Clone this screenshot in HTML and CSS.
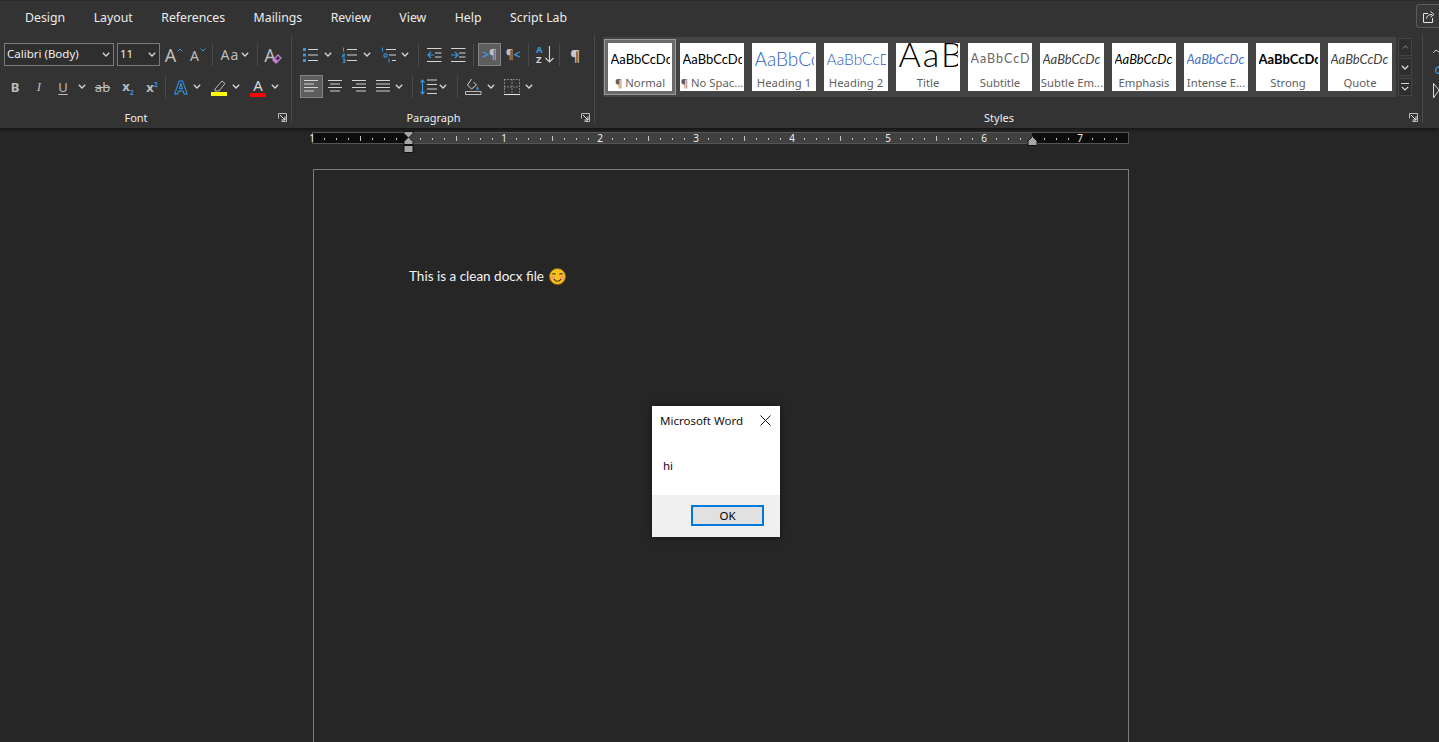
FILE: index.html
```html
<!DOCTYPE html>
<html lang="en">
<head>
    <meta charset="UTF-8">
    <meta name="viewport" content="width=device-width, initial-scale=1.0">
    <title>Document - Word</title>
    <link rel="stylesheet" href="styles.css">
</head>
<body>
    <svg class="sprite" aria-hidden="true">
        <symbol id="chev" viewBox="0 0 8 5"><path d="M.8.8 4 4 7.2.8" fill="none" stroke="#d8d8d8" stroke-width="1.3"/></symbol>
        <symbol id="launch" viewBox="0 0 9 9"><path d="M.5 5.5V.5h8v8h-5" fill="none" stroke="#bdbdbd"/><path d="M2 2l5 5M7 3.5V7H3.5" fill="none" stroke="#e6e6e6"/></symbol>
    </svg>

    <header class="top">
        <nav class="tabs">
            <a>Design</a>
            <a>Layout</a>
            <a>References</a>
            <a>Mailings</a>
            <a>Review</a>
            <a>View</a>
            <a>Help</a>
            <a>Script Lab</a>
            <button class="share">
                <svg width="12" height="13" viewBox="0 0 12 13"><path d="M5 3.5H.5v9h9V8" fill="none" stroke="#e2e2e2"/><path d="M3.5 8.5C4 5.5 6 4.500 9 4.500M7.500 1.500 11 4.500 7.500 7" fill="none" stroke="#e2e2e2"/></svg>
            </button>
        </nav>

        <div class="ribbon">
            <section class="group group-font">
                <div class="row row-a">
                    <div class="select w110 ml4">Calibri (Body)<svg class="c" width="8" height="5"><use href="#chev"/></svg></div>
                    <div class="select w43 ml3">11<svg class="c" width="8" height="5"><use href="#chev"/></svg></div>
                    <span class="tool w28"><span class="big">A</span><svg class="caret" width="6" height="4" viewBox="0 0 6 4"><path d="M.5 3.500 3 1l2.500 2.500" fill="none" stroke="#3a96dd"/></svg></span>
                    <span class="tool w20"><span class="mid">A</span><svg class="caret" width="6" height="4" viewBox="0 0 6 4"><path d="M.5.500 3 3 5.500.500" fill="none" stroke="#3a96dd"/></svg></span>
                    <i class="sep ml4"></i>
                    <span class="tool w44"><span class="aa">Aa</span><svg class="c-in" width="8" height="5"><use href="#chev"/></svg></span>
                    <i class="sep"></i>
                    <span class="tool w30 eraser"><span class="big">A</span><svg width="10" height="10" viewBox="0 0 10 10"><path d="M1 6 6 1l3 3-5 5z" fill="none" stroke="#c77dd1" stroke-width="1.300"/><path d="M1 6l3 3 2-2-3-3z" fill="#c77dd1"/></svg></span>
                </div>
                <div class="row row-b">
                    <span class="tool w24 ml3"><b class="ch bold">B</b></span>
                    <span class="tool w24"><i class="ch ital">I</i></span>
                    <span class="tool w24"><span class="ch under">U</span></span>
                    <span class="tool w14"><svg width="8" height="5"><use href="#chev"/></svg></span>
                    <span class="tool w27"><span class="ch strike">ab</span></span>
                    <span class="tool w24"><b class="ch xs">x<sub>2</sub></b></span>
                    <span class="tool w24"><b class="ch xs">x<sup>2</sup></b></span>
                    <i class="sep ml1"></i>
                    <span class="tool w24 ml3"><span class="ch fancy">A</span></span>
                    <span class="tool w8"><svg width="8" height="5"><use href="#chev"/></svg></span>
                    <span class="tool w24 ml6"><svg width="17" height="18" viewBox="0 0 17 18"><path d="M4 11 11 3l3 2.500L8 13H4z" fill="none" stroke="#bdbdbd"/><rect y="14" width="16" height="4" fill="#ffff00"/></svg></span>
                    <span class="tool w10"><svg width="8" height="5"><use href="#chev"/></svg></span>
                    <span class="tool w24 ml5 colored"><span class="red-a">A</span></span>
                    <span class="tool w10"><svg width="8" height="5"><use href="#chev"/></svg></span>
                </div>
                <div class="label">
                    <span class="label-text">Font</span>
                    <svg class="launch" width="9" height="9"><use href="#launch"/></svg>
                </div>
            </section>

            <section class="group group-para">
                <div class="row row-a">
                    <span class="tool w24 ml7"><svg width="16" height="16" viewBox="0 0 16 16"><path d="M0 1h3v3H0zM0 6.500h3v3H0zM0 12h3v3H0z" fill="#3a96dd"/><path d="M5 2.500h10M5 8h10M5 13.500h10" class="ln"/></svg></span>
                    <span class="tool w10"><svg width="8" height="5"><use href="#chev"/></svg></span>
                    <span class="tool w24 ml5"><svg width="16" height="16" viewBox="0 0 16 16"><path d="M1.500.500v4M.5 7h2v1.500h-2V10h2.500M.5 12H3v3.500H.5M1 13.700h2" fill="none" stroke="#3a96dd"/><path d="M5 2.500h10M5 8h10M5 13.500h10" class="ln"/></svg></span>
                    <span class="tool w10"><svg width="8" height="5"><use href="#chev"/></svg></span>
                    <span class="tool w24 ml5"><svg width="16" height="16" viewBox="0 0 16 16"><path d="M1.500.500v4M3 7h3v3H3zM8 11.500v4" fill="none" stroke="#3a96dd"/><path d="M5 2.500h10M8 8h7M11 13.500h4" class="ln"/></svg></span>
                    <span class="tool w8"><svg width="8" height="5"><use href="#chev"/></svg></span>
                    <i class="sep ml9"></i>
                    <span class="tool w24 ml3"><svg width="15" height="14" viewBox="0 0 15 14"><path d="M0 .5h14.500M8 5h6.500M8 9h6.500M0 13.500h14.500" class="ln"/><path d="M7 7H1M4 4 1 7l3 3" fill="none" stroke="#3a96dd" stroke-width="1.200"/></svg></span>
                    <span class="tool w24"><svg width="15" height="14" viewBox="0 0 15 14"><path d="M0 .5h14.500M8 5h6.500M8 9h6.500M0 13.500h14.500" class="ln"/><path d="M0 7h6M4 4l3 3-3 3" fill="none" stroke="#3a96dd" stroke-width="1.200"/></svg></span>
                    <i class="sep ml3"></i>
                    <span class="tool w23 on ml4"><span class="dir"><em>&gt;</em>¶</span></span>
                    <span class="tool w24"><span class="dir">¶<em>&lt;</em></span></span>
                    <i class="sep ml3"></i>
                    <span class="tool w21 ml5"><svg width="18" height="19" viewBox="0 0 18 19"><text x="0" y="8" class="sort blue">A</text><text x="0" y="18" class="sort">Z</text><path d="M13.500 1v16M9.500 13l4 4 4-4" fill="none" stroke="#d4d4d4" stroke-width="1.100"/></svg></span>
                    <i class="sep ml4"></i>
                    <span class="tool w22 ml4"><span class="pil">¶</span></span>
                </div>
                <div class="row row-b">
                    <span class="tool w23 on ml8"><svg width="15" height="15" viewBox="0 0 15 15"><path d="M0 1.500h14M0 5h10M0 8.500h14M0 12h10" class="ln"/></svg></span>
                    <span class="tool w24"><svg width="15" height="15" viewBox="0 0 15 15"><path d="M0 1.500h14M2 5h10M0 8.500h14M2 12h10" class="ln"/></svg></span>
                    <span class="tool w24"><svg width="15" height="15" viewBox="0 0 15 15"><path d="M0 1.500h14M4 5h10M0 8.500h14M4 12h10" class="ln"/></svg></span>
                    <span class="tool w24"><svg width="15" height="15" viewBox="0 0 15 15"><path d="M0 1.500h14M0 5h14M0 8.500h14M0 12h14" class="ln"/></svg></span>
                    <span class="tool w8"><svg width="8" height="5"><use href="#chev"/></svg></span>
                    <i class="sep ml9"></i>
                    <span class="tool w22 ml4"><svg width="17" height="16" viewBox="0 0 17 16"><path d="M7 1h10M7 5.500h10M7 10h10M7 14.500h10" class="ln"/><path d="M2.500 1v14M.5 3.500l2-2.500 2 2.500M.5 12.500l2 2.500 2-2.500" fill="none" stroke="#3a96dd" stroke-width="1.200"/></svg></span>
                    <span class="tool w8"><svg width="8" height="5"><use href="#chev"/></svg></span>
                    <i class="sep ml10"></i>
                    <span class="tool w24 ml3"><svg width="17" height="17" viewBox="0 0 17 17"><path d="M6.500 1 2.500 7l4 4 5-4-3-3" fill="none" stroke="#cfcfcf"/><path d="M12 8c1.500 1.500 2 2.500 1.500 3.500s-2 .5-2-.5.500-2 .5-3z" fill="#3a96dd"/><path d="M.5 13.500h15.500v3H.5z" fill="none" stroke="#bdbdbd"/></svg></span>
                    <span class="tool w10 ml1"><svg width="8" height="5"><use href="#chev"/></svg></span>
                    <span class="tool w24 ml4"><svg width="16" height="16" viewBox="0 0 16 16"><path d="M.5.500h15M.5.500v15M15.500.500v15M.5 8h15M8 .5v15" fill="none" stroke="#c8c8c8" stroke-dasharray="1 2"/><path d="M0 15.500h16" stroke="#e8e8e8"/></svg></span>
                    <span class="tool w10"><svg width="8" height="5"><use href="#chev"/></svg></span>
                </div>
                <div class="label">
                    <span class="label-text">Paragraph</span>
                    <svg class="launch" width="9" height="9"><use href="#launch"/></svg>
                </div>
            </section>

            <section class="group group-styles">
                <div class="gallery-wrap">
                    <div class="gallery">
                        <div class="style selected"><span class="sample">AaBbCcDc</span><span class="name">¶ Normal</span></div>
                        <div class="style"><span class="sample">AaBbCcDc</span><span class="name">¶ No Spac...</span></div>
                        <div class="style"><span class="sample h1">AaBbCc</span><span class="name">Heading 1</span></div>
                        <div class="style"><span class="sample h2">AaBbCcD</span><span class="name">Heading 2</span></div>
                        <div class="style"><span class="sample title">AaB</span><span class="name">Title</span></div>
                        <div class="style"><span class="sample sub">AaBbCcD</span><span class="name">Subtitle</span></div>
                        <div class="style"><span class="sample subtle">AaBbCcDc</span><span class="name">Subtle Em...</span></div>
                        <div class="style"><span class="sample emph">AaBbCcDc</span><span class="name">Emphasis</span></div>
                        <div class="style"><span class="sample intense">AaBbCcDc</span><span class="name">Intense E...</span></div>
                        <div class="style"><span class="sample strong">AaBbCcDc</span><span class="name">Strong</span></div>
                        <div class="style"><span class="sample subtle">AaBbCcDc</span><span class="name">Quote</span></div>
                    </div>
                    <div class="scroller">
                        <span class="scroll-btn up"><svg width="7" height="4" viewBox="0 0 8 5"><path d="M.8 4.200 4 1l3.200 3.200" fill="none" stroke="#6a6a6a" stroke-width="1.300"/></svg></span>
                        <span class="scroll-btn"><svg width="8" height="5"><use href="#chev"/></svg></span>
                        <span class="scroll-btn more"><svg width="8" height="8" viewBox="0 0 8 8"><path d="M0 .5h8M.8 3.800 4 7l3.200-3.200" fill="none" stroke="#d8d8d8" stroke-width="1.200"/></svg></span>
                    </div>
                </div>
                <div class="label">
                    <span class="label-text">Styles</span>
                    <svg class="launch" width="9" height="9"><use href="#launch"/></svg>
                </div>
            </section>

            <section class="group-cut">
                <svg width="6" height="60" viewBox="0 0 6 60"><path d="M0 12 3 9l3 2" fill="none" stroke="#cfcfcf"/><path d="M6 26C3 26 2 29 3 31c.5 1 2 2 3 1" fill="none" stroke="#3a96dd" stroke-width="1.300"/><path d="M.5 42.500 6 49 .5 57z" fill="none" stroke="#dcdcdc"/></svg>
            </section>
        </div>
    </header>

    <div class="ruler">
        <svg class="ticks" width="815" height="10">
            <defs>
                <pattern id="tick" width="96" height="10" patternUnits="userSpaceOnUse" patternTransform="translate(-1 0)">
                    <path d="M12 5h1v2h-1zM24 5h1v2h-1zM36 5h1v2h-1zM60 5h1v2h-1zM72 5h1v2h-1zM84 5h1v2h-1zM48 3h1v5h-1z" fill="#c4c4c4"/>
                </pattern>
            </defs>
            <rect width="815" height="10" fill="url(#tick)"/>
        </svg>
        <div class="marks">
            <span>1</span><span></span><span>1</span><span>2</span><span>3</span><span>4</span><span>5</span><span>6</span><span>7</span>
        </div>
        <svg class="indent-left" width="11" height="23" viewBox="0 0 11 23"><path d="M1 1.500h9v2L6 7.500l4 4v3H1v-3l4-4-4-4zM1 15.500h9v7H1z" fill="#a6a6a6" stroke="#111"/></svg>
        <svg class="indent-right" width="11" height="10" viewBox="0 0 11 10"><path d="M5.500 .5 10 5v4.500H1V5z" fill="#a6a6a6" stroke="#111"/></svg>
    </div>

    <main class="workspace">
        <article class="page">
            <p class="doc-text">This is a clean docx file
                <svg class="emoji" width="17" height="17" viewBox="0 0 17 17"><circle cx="8.500" cy="8.500" r="8" fill="#fcc21b" stroke="#8a6414"/><circle cx="3.800" cy="9.800" r="2" fill="#f79a6b"/><circle cx="13.200" cy="9.800" r="2" fill="#f79a6b"/><path d="M3.500 6.500c.7-1.400 2.300-1.400 3 0M10.500 6.500c.7-1.400 2.300-1.400 3 0" fill="none" stroke="#4a3208" stroke-width="1.100"/><path d="M5 11c1.500 3 5.500 3 7 0" fill="none" stroke="#4a3208" stroke-width="1.100"/></svg>
            </p>
        </article>
    </main>

    <div class="dialog">
        <div class="dialog-title">
            <span>Microsoft Word</span>
            <svg width="11" height="11" viewBox="0 0 11 11"><path d="M.5.500l10 10M10.500.500l-10 10" stroke="#111" fill="none"/></svg>
        </div>
        <div class="dialog-body">hi</div>
        <div class="dialog-foot"><button class="ok">OK</button></div>
    </div>
</body>
</html>
```

FILE: styles.css
```css
* {
    box-sizing: border-box;
}
html, body {
    height: 100%;
}
body {
    font-family: "Noto Sans", "Open Sans", sans-serif;
    background-color: #262626;
    color: #f0f0f0;
    margin: 0;
    padding: 0;
    overflow: hidden;
    position: relative;
}
svg {
    overflow: visible;
    flex-shrink: 0;
}
.sprite {
    display: none;
}

/* tabs */
.top {
    background-color: #333;
    box-shadow: 0 2px 3px rgba(0, 0, 0, .45);
    border-top: 1px solid #2a2a2a;
}
.tabs {
    height: 32px;
    display: flex;
    align-items: center;
    padding-left: 25px;
    font-size: 12.300px;
    overflow: hidden;
    color: #ececec;
}
.tabs a {
    margin-right: 28.500px;
}
.share {
    margin-left: auto;
    margin-right: -8px;
    width: 31px;
    height: 24px;
    margin-top: -2px;
    background-color: #383838;
    border: 1px solid #5c5c5c;
    border-radius: 3px;
    display: flex;
    align-items: center;
    padding: 0 0 0 6px;
    flex-shrink: 0;
}

/* ribbon */
.ribbon {
    height: 95px;
    display: flex;
}
.group {
    flex-shrink: 0;
    padding-top: 8px;
    height: 88px;
    margin-top: 2px;
    border-right: 1px solid #4a4a4a;
    display: flex;
    flex-direction: column;
}
.group-font {
    width: 292px;
}
.group-para {
    width: 303px;
}
.group-styles {
    width: 828px;
    padding-top: 2px;
}
.group-cut {
    flex: 1;
    padding: 8px 0 0 10px;
    overflow: hidden;
}
.row {
    display: flex;
    align-items: center;
    height: 23px;
    flex-shrink: 0;
}
.row-b {
    margin-top: 9px;
}
.label {
    margin-top: auto;
    margin-bottom: -2px;
    display: grid;
    grid-template-columns: 1fr auto 1fr;
    align-items: center;
    height: 16px;
    font-size: 11px;
    color: #eee;
    padding-right: 2px;
}
.label-text {
    grid-column: 2;
    margin-right: 17px;
}
.launch {
    grid-column: 3;
    justify-self: end;
    margin-right: 2px;
}

/* font boxes */
.select {
    height: 23px;
    border: 1px solid #7a7a7a;
    background-color: #2e2e2e;
    font-size: 11.500px;
    line-height: 20px;
    padding: 0 3px 2px 2px;
    display: flex;
    align-items: center;
    justify-content: space-between;
    flex-shrink: 0;
}
.select svg {
    margin-top: 2px;
}
.tool {
    display: flex;
    align-items: center;
    justify-content: center;
    height: 23px;
    flex-shrink: 0;
}
.tool.on {
    background-color: #5d5d5d;
    border: 1px solid #858585;
}
.sep {
    width: 1px;
    height: 22px;
    background-color: #4a4a4a;
    flex-shrink: 0;
}
.w8 { width: 8px; }
.w10 { width: 10px; }
.w14 { width: 14px; }
.w20 { width: 20px; }
.w21 { width: 21px; }
.w22 { width: 22px; }
.w23 { width: 23px; }
.w24 { width: 24px; }
.w27 { width: 27px; }
.w28 { width: 28px; }
.w30 { width: 30px; }
.w43 { width: 43px; }
.w44 { width: 44px; }
.w110 { width: 110px; }
.ml1 { margin-left: 1px; }
.ml3 { margin-left: 3px; }
.ml4 { margin-left: 4px; }
.ml5 { margin-left: 5px; }
.ml6 { margin-left: 6px; }
.ml7 { margin-left: 7px; }
.ml8 { margin-left: 8px; }
.ml9 { margin-left: 9px; }
.ml10 { margin-left: 10px; }

/* icon glyphs */
.big, .mid {
    color: #bdbdbd;
    line-height: 1;
}
.big {
    font-size: 18px;
}
.mid {
    font-size: 14px;
    margin-top: 2px;
}
.caret {
    margin: -9px 0 0 1px;
}
.eraser svg {
    margin: 9px 0 0 -4px;
}
.red-a {
    font-size: 15px;
    line-height: 15px;
    color: #d8d8d8;
    width: 16px;
    text-align: center;
    border-bottom: 4px solid #f00;
    margin-top: 1px;
}
.ln {
    fill: none;
    stroke: #d4d4d4;
    stroke-width: 1;
}
.sort {
    font-size: 9.500px;
    font-weight: 700;
    fill: #d4d4d4;
}
.sort.blue {
    fill: #3a96dd;
}
.aa {
    font-size: 14px;
    color: #bdbdbd;
    letter-spacing: 1px;
}
.c-in {
    margin-left: 2px;
}
.ch {
    font-size: 13px;
    color: #bdbdbd;
    font-style: normal;
    font-weight: 400;
}
.bold {
    font-weight: 700;
}
.ital {
    font-family: "Liberation Serif", serif;
    font-style: italic;
}
.under {
    text-decoration: underline;
    text-underline-offset: 2px;
}
.strike {
    text-decoration: line-through;
}
.xs {
    font-weight: 700;
    font-size: 13px;
    line-height: 12px;
}
.xs sub, .xs sup {
    font-size: 7px;
    color: #3a96dd;
    line-height: 0;
}
.fancy {
    font-size: 18px;
    font-weight: 700;
    color: #262626;
    -webkit-text-stroke: 1px #3a96dd;
}
.dir {
    font-size: 12px;
    color: #bdbdbd;
    line-height: 1;
}
.dir em {
    color: #3a96dd;
    font-style: normal;
    font-weight: 700;
}
.pil {
    font-size: 15px;
    font-weight: 700;
    color: #c8c8c8;
}

/* styles gallery */
.gallery-wrap {
    display: flex;
    margin-left: 8px;
    flex-shrink: 0;
}
.gallery {
    width: 793px;
    height: 60px;
    background-color: #444;
    display: flex;
    gap: 8px;
    padding: 6px 0 0 5px;
}
.style {
    width: 64px;
    height: 48px;
    background-color: #fff;
    display: flex;
    flex-direction: column;
    align-items: center;
    flex-shrink: 0;
    overflow: hidden;
}
.style.selected {
    box-shadow: 0 0 0 3px #6a6a6a, 0 0 0 4px #9a9a9a;
    overflow: visible;
}
.sample {
    height: 32px;
    width: 59px;
    flex-shrink: 0;
    font-family: "Lato", sans-serif;
    font-size: 13px;
    line-height: 32px;
    color: #000;
    white-space: nowrap;
    overflow: hidden;
}
.sample.h1 {
    font-size: 19px;
    font-weight: 300;
    color: #2f62c0;
}
.sample.h2 {
    font-size: 15.500px;
    font-weight: 300;
    color: #2f62c0;
}
.sample.title {
    font-size: 34px;
    font-weight: 300;
    line-height: 21px;
    letter-spacing: 2px;
}
.sample.sub {
    color: #666;
    letter-spacing: 1px;
    font-size: 12.500px;
}
.sample.subtle {
    color: #404040;
    font-style: italic;
}
.sample.emph {
    font-style: italic;
}
.sample.intense {
    color: #4472c4;
    font-style: italic;
}
.sample.strong {
    font-weight: 700;
}
.name {
    font-size: 11.300px;
    color: #5f5f5f;
    line-height: 16px;
    white-space: nowrap;
}
.scroller {
    margin-left: 2px;
    display: flex;
    flex-direction: column;
    gap: 2px;
    padding-top: 1px;
}
.scroll-btn {
    width: 14px;
    height: 18px;
    border: 1px solid #444;
    background-color: #2e2e2e;
    display: flex;
    align-items: center;
    justify-content: center;
}

/* ruler */
.ruler {
    position: relative;
    width: 817px;
    height: 12px;
    margin: 4px 0 0 312px;
    border: 1px solid #555;
    background-color: #0c0c0c;
}
/* lighter part between the margins */
.ruler::before {
    content: "";
    position: absolute;
    top: 0;
    bottom: 0;
    left: 95px;
    width: 624px;
    background-color: #404040;
}
.ticks {
    position: absolute;
    left: 0;
    top: 0;
}
.marks {
    position: relative;
    display: flex;
    margin-left: -49px;
    height: 10px;
}
.marks span {
    width: 96px;
    flex-shrink: 0;
    text-align: center;
    font-size: 10px;
    line-height: 10px;
    color: #eee;
}
.indent-left {
    position: absolute;
    left: 90px;
    top: -3px;
}
.indent-right {
    position: absolute;
    left: 714px;
    top: 3px;
}

/* document */
.workspace {
    padding: 25px 0 0 313px;
}
.page {
    width: 816px;
    height: 700px;
    border: 1px solid #7d7d7d;
    padding: 97px 0 0 95px;
}
.doc-text {
    margin: 0;
    font-family: "Lato", "Noto Sans", sans-serif;
    font-size: 13.500px;
    line-height: 19px;
    color: #f2f2f2;
    display: flex;
    align-items: center;
    gap: 5px;
}

/* message box */
.dialog {
    position: absolute;
    left: 652px;
    top: 406px;
    width: 128px;
    height: 131px;
    background-color: #fff;
    color: #111;
    box-shadow: 0 0 8px rgba(0, 0, 0, .5);
    display: flex;
    flex-direction: column;
    font-size: 11.500px;
}
.dialog-title {
    display: flex;
    align-items: center;
    justify-content: space-between;
    height: 29px;
    padding: 0 9px 0 8px;
}
.dialog-body {
    flex: 1;
    padding: 23px 0 0 11px;
    font-size: 11.500px;
    color: #1c0018;
}
.dialog-foot {
    height: 42px;
    background-color: #f0f0f0;
    padding: 10px 16px 0 0;
    display: flex;
    justify-content: flex-end;
    align-items: flex-start;
}
.ok {
    width: 73px;
    height: 21px;
    padding: 0;
    background-color: #e1e1e1;
    border: 2px solid #0078d7;
    font-family: inherit;
    font-size: 11.500px;
    color: #000;
}
```
